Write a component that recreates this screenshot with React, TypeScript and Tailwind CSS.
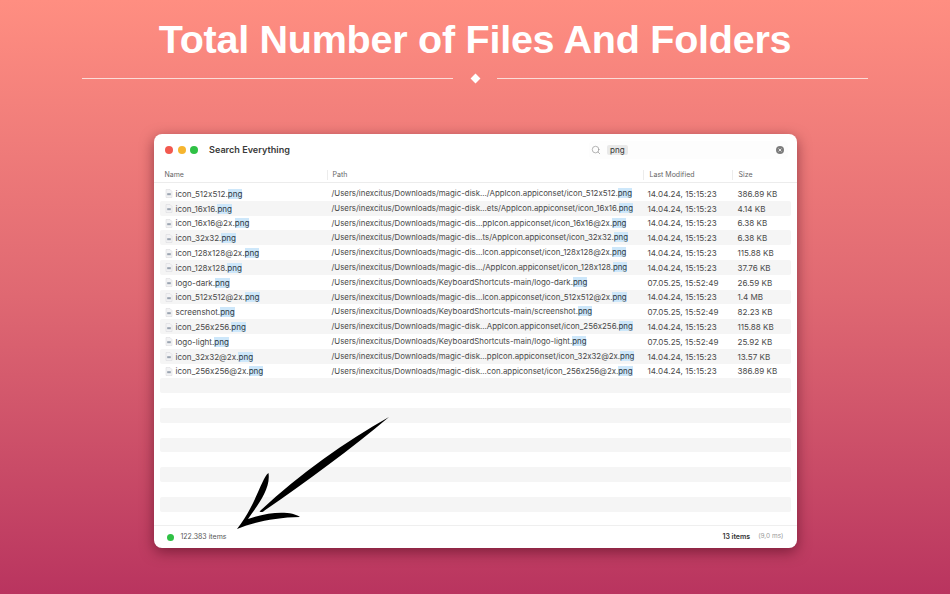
import { Search } from "lucide-react"

type Row = { name: string; path: string; date: string; size: string }

const magic = "/Users/inexcitus/Downloads/magic-dis"
const kb = "/Users/inexcitus/Downloads/KeyboardShortcuts-main/"
const d1 = "14.04.24, 15:15:23"
const d2 = "07.05.25, 15:52:49"

const rows: Row[] = [
  { name: "icon_512x512", path: magic + "k.../AppIcon.appiconset/icon_512x512", date: d1, size: "386.89 KB" },
  { name: "icon_16x16", path: magic + "k...ets/AppIcon.appiconset/icon_16x16", date: d1, size: "4.14 KB" },
  { name: "icon_16x16@2x", path: magic + "...ppIcon.appiconset/icon_16x16@2x", date: d1, size: "6.38 KB" },
  { name: "icon_32x32", path: magic + "...ts/AppIcon.appiconset/icon_32x32", date: d1, size: "6.38 KB" },
  { name: "icon_128x128@2x", path: magic + "...Icon.appiconset/icon_128x128@2x", date: d1, size: "115.88 KB" },
  { name: "icon_128x128", path: magic + ".../AppIcon.appiconset/icon_128x128", date: d1, size: "37.76 KB" },
  { name: "logo-dark", path: kb + "logo-dark", date: d2, size: "26.59 KB" },
  { name: "icon_512x512@2x", path: magic + "...Icon.appiconset/icon_512x512@2x", date: d1, size: "1.4 MB" },
  { name: "screenshot", path: kb + "screenshot", date: d2, size: "82.23 KB" },
  { name: "icon_256x256", path: magic + "k...AppIcon.appiconset/icon_256x256", date: d1, size: "115.88 KB" },
  { name: "logo-light", path: kb + "logo-light", date: d2, size: "25.92 KB" },
  { name: "icon_32x32@2x", path: magic + "k...ppIcon.appiconset/icon_32x32@2x", date: d1, size: "13.57 KB" },
  { name: "icon_256x256@2x", path: magic + "k...con.appiconset/icon_256x256@2x", date: d1, size: "386.89 KB" },
]

const cols = "grid grid-cols-[167px_316px_89px_1fr]"
const emptyRows = Array.from({ length: 9 }, (_, i) => i)

function Png() {
  return <span className="bg-[#cde7fa] text-[#2f3a44]">png</span>
}

function FileIcon() {
  return (
    <svg width="8" height="9" viewBox="0 0 8 9" className="shrink-0">
      <path d="M1 .5h4l2 2v6H1z" fill="#f3f3f5" stroke="#d6d7da" strokeWidth=".5" />
      <rect x="2.2" y="4.2" width="3.6" height="2" fill="#9aa3b0" />
    </svg>
  )
}

function Arrow() {
  return (
    <svg className="absolute left-0 top-0 pointer-events-none" width="950" height="594" viewBox="0 0 950 594">
      <path d="M389 417 C345 442 299 474 259.5 511.5 C262 512.5 263 512 264.5 510.5 C306 482 351 449 389 417Z" fill="#000" />
      <path d="M268.5 473 C262 477 256 505 237 529 C255 522 275 517.5 300 517 C292 511 270 511 248 519 C256 507 271 490 268.5 473Z" fill="#000" />
    </svg>
  )
}

export default function App() {
  return (
    <div className="relative w-[950px] h-[594px] overflow-hidden flex flex-col items-center bg-gradient-to-b from-[#ff8e81] via-[#df6872] to-[#b9345f] font-['Inter',sans-serif] [font-feature-settings:'calt'_0]">
      <h1 className="mt-[14px] h-[50px] leading-[50px] text-[39.5px] tracking-[-0.25px] font-bold text-white font-['Liberation_Sans',sans-serif]">
        Total Number of Files And Folders
      </h1>
      <div className="mt-[14px] h-[1px] w-[786px] flex items-center justify-between">
        <div className="h-px w-[371px] bg-[#fbdcd8]" />
        <div className="w-[7px] h-[7px] rotate-45 bg-white" />
        <div className="h-px w-[371px] bg-[#fbdcd8]" />
      </div>

      <div className="mt-[55px] w-[643px] h-[414px] bg-white rounded-[8px] shadow-[0_4px_14px_rgba(60,0,20,0.5)] flex flex-col text-[#4a4a4a] text-[8.05px]">
        <div className="h-[32px] shrink-0 flex items-center pl-[11.5px] pr-[12px]">
          <div className="flex gap-[4.5px]">
            <span className="w-[8px] h-[8px] rounded-full bg-[#f2594f]" />
            <span className="w-[8px] h-[8px] rounded-full bg-[#f6b52f]" />
            <span className="w-[8px] h-[8px] rounded-full bg-[#2fc145]" />
          </div>
          <span className="ml-[11px] text-[9.1px] font-semibold text-[#3a3a3a]">Search Everything</span>
          <div className="ml-auto w-[199px] h-[18px] -mr-[3.5px] pl-[2px] pr-[4px] flex items-center rounded-[4px] bg-[#fdfdfd]">
            <Search size={10} className="text-[#8a8a8a]" strokeWidth={1.5} />
            <span className="ml-[6px] text-[#333] flex-1">
              <span className="inline-block px-[3px] bg-[#e9e9e9] rounded-[2px] leading-[10px]">png</span>
            </span>
            <span className="w-[8px] h-[8px] rounded-full bg-[#7d7d7d] flex items-center justify-center">
              <svg width="4" height="4" viewBox="0 0 4 4">
                <path d="M.6.6l2.8 2.8M3.4.6L.6 3.4" stroke="#fff" strokeWidth=".8" />
              </svg>
            </span>
          </div>
        </div>

        <div className={`${cols} h-[17px] pt-[2px] shrink-0 items-center text-[7px] text-[#666] border-b border-[#ececec] px-[6px]`}>
          <span className="pl-[5px]">Name</span>
          <span className="pl-[5px] border-l border-[#ececec]">Path</span>
          <span className="pl-[6px] border-l border-[#ececec]">Last Modified</span>
          <span className="pl-[6px] border-l border-[#ececec]">Size</span>
        </div>

        <div className="flex-1 px-[6px] pt-[3px] overflow-hidden">
          {rows.map((r, i) => (
            <div key={r.name} className={`${cols} h-[14.8px] pt-[1px] items-center rounded-[2px] whitespace-nowrap ${i % 2 ? "bg-[#f5f5f5]" : ""}`}>
              <span className="pl-[5px] flex items-center gap-[3px]">
                <FileIcon />
                <span>{r.name}.<Png /></span>
              </span>
              <span className="pl-[5px] text-[7.87px]">{r.path}.<Png /></span>
              <span className="pl-[5px] tracking-[0.08px]">{r.date}</span>
              <span className="pl-[6px]">{r.size}</span>
            </div>
          ))}
          {emptyRows.map((i) => (
            <div key={i} className={`h-[14.8px] rounded-[2px] ${i % 2 === 0 ? "bg-[#f5f5f5]" : ""}`} />
          ))}
        </div>

        <div className="h-[23px] shrink-0 border-t border-[#efefef] flex items-center pl-[13.5px] pr-[13px] text-[7px]">
          <span className="w-[7px] h-[7px] rounded-full bg-[#2fc145]" />
          <span className="ml-[6.5px] text-[#555]">122.383 items</span>
          <span className="ml-auto font-semibold text-[#333]">13 items</span>
          <span className="ml-[8px] text-[6.5px] text-[#999]">(9,0 ms)</span>
        </div>
      </div>

      <Arrow />
    </div>
  )
}
